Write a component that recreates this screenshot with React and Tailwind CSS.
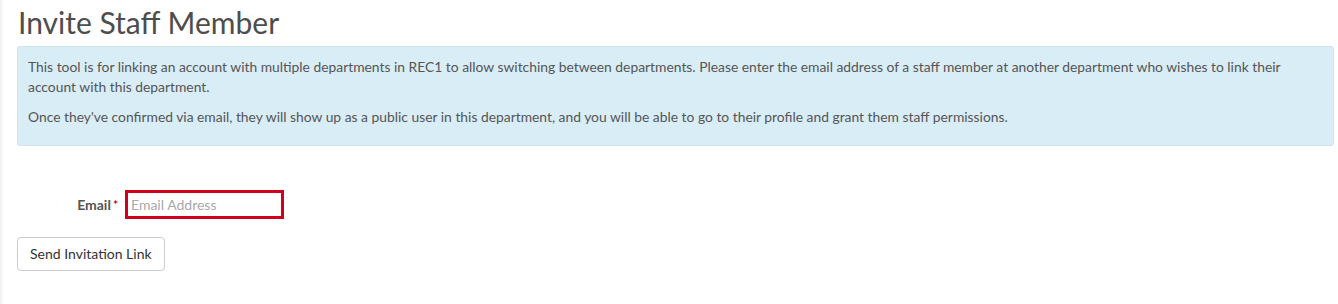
import React from 'react';

const font = { fontFamily: 'Lato, "Open Sans", sans-serif' };

export default function App() {
  return (
    <div className="min-h-[304px] bg-white text-[#555] font-['Lato',sans-serif] text-[14px] leading-[20px] relative">
      {/* faint sidebar shadow on the left edge */}
      <div className="absolute left-0 top-0 bottom-0 w-[4px] bg-gradient-to-r from-[#f0f0f0] to-white" />
      <div className="pl-[17px] pr-[4px]">
        <h2 className="text-[30px] leading-[33px] font-normal text-[#4d4d4d] pt-[6px] pl-[1px] mb-[7px]">
          Invite Staff Member
        </h2>

        <div className="bg-[#d9edf7] border border-[#d2e2ea] rounded-[3px] px-[10px] pt-[10px] pb-[8px] text-[13.85px] text-[#555]">
          <p className="mb-[10px]">
            This tool is for linking an account with multiple departments in REC1 to allow switching between departments. Please enter the email address of a staff member at another department who wishes to link their account with this department.
          </p>
          <p className="mb-[10px]">
            Once they've confirmed via email, they will show up as a public user in this department, and you will be able to go to their profile and grant them staff permissions.
          </p>
        </div>

        <form className="mt-[44px]" onSubmit={(e) => e.preventDefault()}>
          <div className="flex items-center">
            <label className="w-[108px] text-right font-bold text-[#555] pr-[7px]">
              Email<span className="text-[#d0021b] text-[12px] align-top ml-[2px]">*</span>
            </label>
            <input
              type="email"
              placeholder="Email Address"
              className="w-[159px] h-[29px] border-[3px] border-[#d0021b] px-[3px] text-[14px] text-[#555] placeholder:text-[#a9a9a9] outline-none"
              style={font}
            />
          </div>

          <button
            type="submit"
            className="mt-[18px] h-[34px] px-[12px] border border-[#ccc] rounded-[4px] bg-white text-[14px] text-[#333]"
            style={font}
          >
            Send Invitation Link
          </button>
        </form>
      </div>
    </div>
  );
}
